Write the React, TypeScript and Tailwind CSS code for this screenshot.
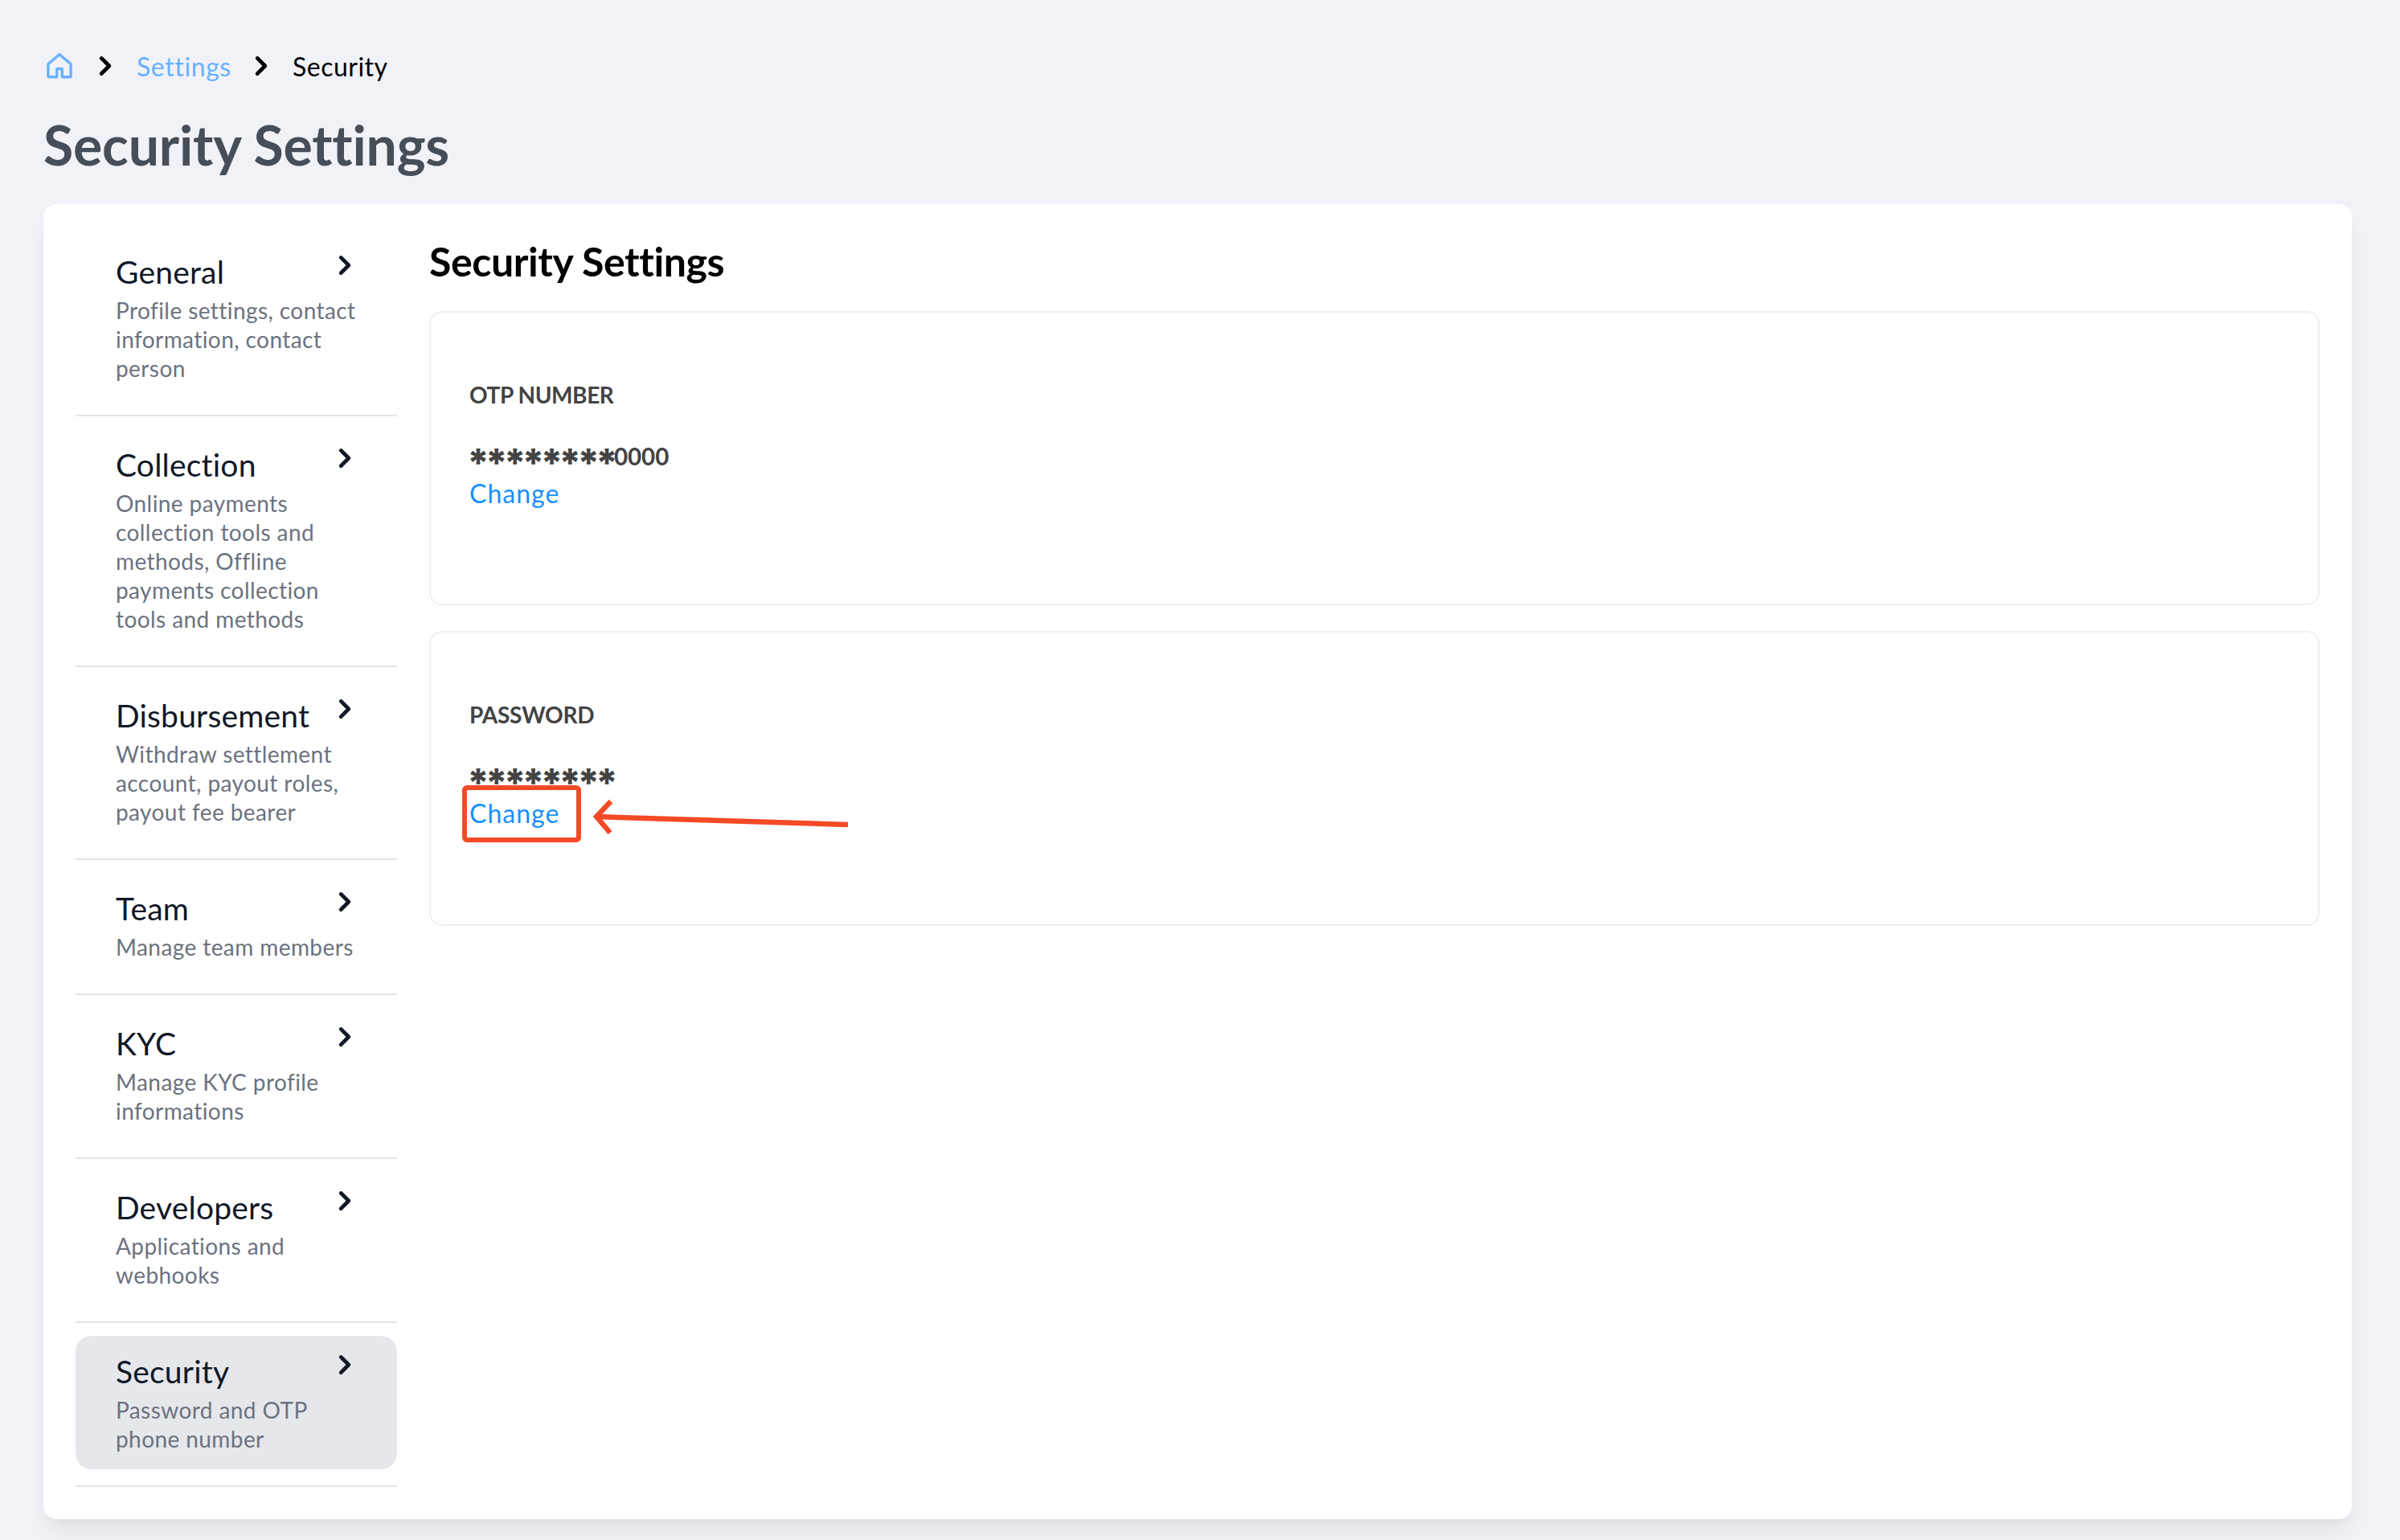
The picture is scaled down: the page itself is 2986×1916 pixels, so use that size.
import { Fragment } from 'react'

type NavItem = {
  title: string
  lines: string[]
  active?: boolean
}

const NAV_ITEMS: NavItem[] = [
  { title: 'General', lines: ['Profile settings, contact', 'information, contact', 'person'] },
  {
    title: 'Collection',
    lines: [
      'Online payments',
      'collection tools and',
      'methods, Offline',
      'payments collection',
      'tools and methods',
    ],
  },
  { title: 'Disbursement', lines: ['Withdraw settlement', 'account, payout roles,', 'payout fee bearer'] },
  { title: 'Team', lines: ['Manage team members'] },
  { title: 'KYC', lines: ['Manage KYC profile', 'informations'] },
  { title: 'Developers', lines: ['Applications and', 'webhooks'] },
  { title: 'Security', lines: ['Password and OTP', 'phone number'], active: true },
]

function Chevron() {
  return (
    <svg viewBox="0 0 20 20" fill="currentColor" className="w-12 h-12 shrink-0">
      <path
        fillRule="evenodd"
        clipRule="evenodd"
        d="M7.293 14.707a1 1 0 010-1.414L10.586 10 7.293 6.707a1 1 0 011.414-1.414l4 4a1 1 0 010 1.414l-4 4a1 1 0 01-1.414 0z"
      />
    </svg>
  )
}

function HomeIcon() {
  return (
    <svg
      viewBox="0 0 32 32"
      fill="none"
      stroke="currentColor"
      strokeWidth="3.4"
      strokeLinejoin="round"
      className="w-8 h-8 shrink-0"
    >
      <path d="M16 1.700 2.400 13.200Q1.900 13.700 1.900 14.500V28.500Q1.900 29.700 3.100 29.700H12.700V20.500Q12.700 19.500 13.700 19.500H18.300Q19.300 19.500 19.300 20.500V29.700H28.900Q30.100 29.700 30.100 28.500V14.500Q30.100 13.700 29.600 13.200Z" />
    </svg>
  )
}

function Breadcrumb() {
  return (
    <nav className="flex items-center h-12 pl-1 text-[32px] leading-12">
      <span className="text-[#69b1ff]">
        <HomeIcon />
      </span>
      <span className="ml-[17px]">
        <Chevron />
      </span>
      <a className="ml-[15px] w-[117px] pt-0.5 tracking-[0.6px] text-[#69b1ff]">Settings</a>
      <span className="ml-[14px]">
        <Chevron />
      </span>
      <span className="ml-[15px] pt-0.5 tracking-[0.5px]">Security</span>
    </nav>
  )
}

function SideNav() {
  return (
    <aside className="w-[400px] shrink-0">
      {NAV_ITEMS.map((item) => (
        <div key={item.title} className="pt-4 pb-5 border-b-2 border-[#e5e5e5]">
          <div
            className={
              item.active
                ? 'flex justify-between rounded-[20px] bg-[#e5e7eb] pl-[50px] pr-[41px] pt-3 pb-5'
                : 'flex justify-between pl-[50px] pr-[41px] pt-3 pb-5'
            }
          >
            <div className="pt-1 whitespace-nowrap w-[300px]">
              <div className="h-[58px] text-[39px] leading-[56px] tracking-[0.2px] text-[#111827]">{item.title}</div>
              <p className="text-[28px] leading-9 tracking-[0.42px] text-[#6b7280]">
                {item.lines.map((line) => (
                  <Fragment key={line}>
                    {line}
                    <br />
                  </Fragment>
                ))}
              </p>
            </div>
            <span className="-ml-12 text-[#111827]">
              <Chevron />
            </span>
          </div>
        </div>
      ))}
    </aside>
  )
}

function Mask() {
  return <span className="-ml-[3px] pt-2 font-[Inter] text-[48px] font-extrabold tracking-[-5.1px]">********</span>
}

function PointerArrow() {
  return (
    <svg
      width="324"
      height="52"
      viewBox="0 0 324 52"
      fill="none"
      stroke="#f54a26"
      strokeWidth="6.5"
      className="absolute left-[151px] top-[2px]"
    >
      <path d="M25 7 7 26l17 20" />
      <path d="M7 26 320 36" />
    </svg>
  )
}

export default function App() {
  return (
    <div className="h-[1916px] overflow-hidden bg-[#f1f2f8] px-[54px] pt-[58px] font-[Lato,'Open_Sans',sans-serif] text-black">
      <Breadcrumb />
      <h1 className="mt-[26px] h-[122px] text-[68px] leading-[96px] font-bold tracking-[-0.2px] text-[#464e59]">
        Security Settings
      </h1>

      <main className="flex h-[1636px] w-[2872px] gap-10 rounded-2xl bg-white px-10 pt-6 shadow-[0_20px_30px_-6px_rgba(0,0,0,0.07),0_8px_12px_-4px_rgba(0,0,0,0.03)]">
        <SideNav />

        <div className="flex-1">
          <h2 className="h-[109px] pt-[17px] text-[50px] leading-[60px] font-bold tracking-[-0.4px]">Security Settings</h2>

          <section className="h-[366px] rounded-2xl border-2 border-[#f0f0f0] pl-12 pt-20 text-[#434343]">
            <h3 className="text-[28px] leading-[44px] font-bold tracking-[-0.4px]">OTP NUMBER</h3>
            <div className="mt-[33px] flex h-11 text-[29.500px] leading-[44px] font-bold">
              <Mask />
              <span>0000</span>
            </div>
            <a className="block text-[32px] leading-[48px] tracking-[1px] text-[#1890ff]">Change</a>
          </section>

          <section className="mt-8 h-[367px] rounded-2xl border-2 border-[#f0f0f0] pl-12 pt-20 text-[#434343]">
            <h3 className="text-[28px] leading-[44px] font-bold tracking-[-0.2px]">PASSWORD</h3>
            <div className="mt-[33px] flex h-11 text-[28px] leading-[44px] font-bold">
              <Mask />
            </div>
            <div className="relative">
              <a className="block text-[32px] leading-[48px] tracking-[1px] text-[#1890ff]">Change</a>
              {/* Highlight over the password link */}
              <div className="absolute -left-[9px] -top-[11px] h-[71px] w-[148px] rounded-md border-6 border-[#f54a26]" />
              <PointerArrow />
            </div>
          </section>
        </div>
      </main>
    </div>
  )
}
